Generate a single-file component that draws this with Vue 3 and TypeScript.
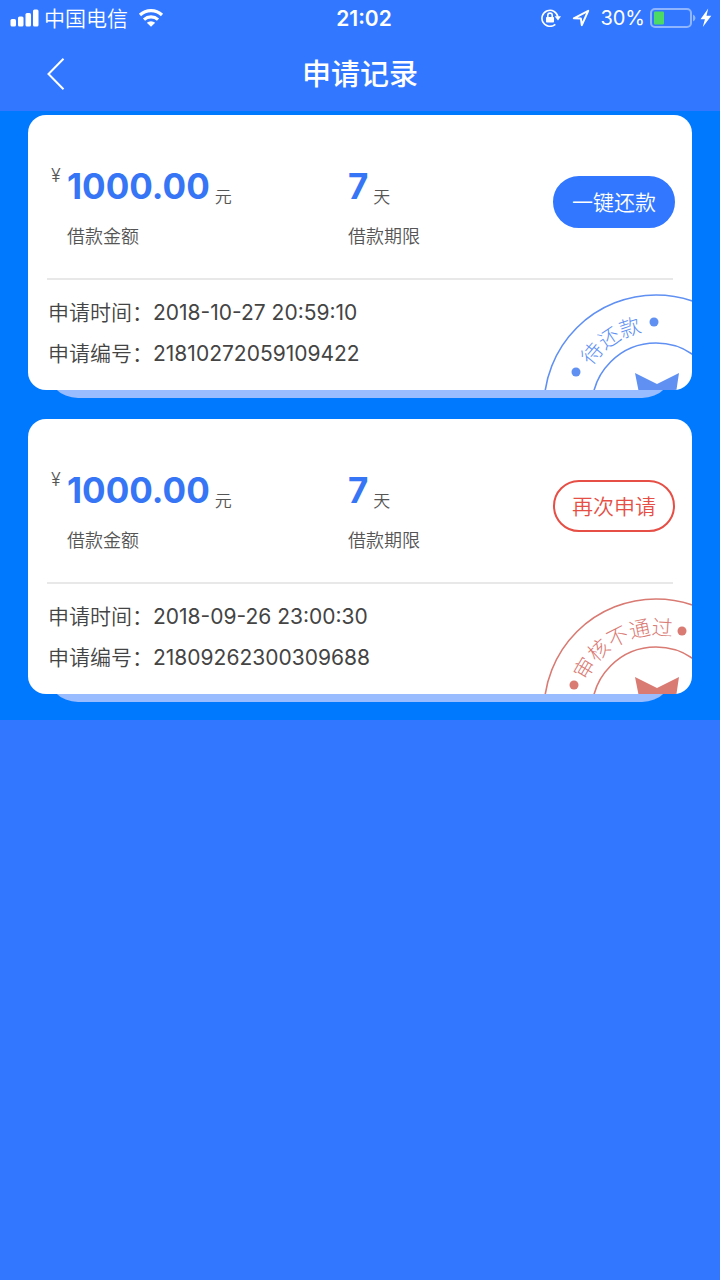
<script setup lang="ts">
interface LoanRecord {
  id: string
  amount: string
  days: number
  appliedAt: string
  action: string
  status: string
  tone: 'pending' | 'rejected'
  textOffset: number
  dots: [number, number][]
}

const records: LoanRecord[] = [
  {
    id: '21810272059109422',
    amount: '1000.00',
    days: 7,
    appliedAt: '2018-10-27 20:59:10',
    action: '一键还款',
    status: '待还款',
    tone: 'pending',
    textOffset: 74,
    dots: [[32, 78], [110, 28]],
  },
  {
    id: '21809262300309688',
    amount: '1000.00',
    days: 7,
    appliedAt: '2018-09-26 23:00:30',
    action: '再次申请',
    status: '审核不通过',
    tone: 'rejected',
    textOffset: 83,
    dots: [[30, 87], [138, 33]],
  },
]
</script>

<template>
  <div class="screen">
    <header class="top">
      <div class="status">
        <div class="status-side">
          <svg class="signal" width="29" height="18" viewBox="0 0 29 18" aria-hidden="true">
            <rect x="0.5" y="10" width="5.5" height="7.5" rx="1.5" />
            <rect x="8" y="7.5" width="5.5" height="10" rx="1.5" />
            <rect x="15.5" y="4" width="5.5" height="13.5" rx="1.5" />
            <rect x="23" y="0.5" width="5.5" height="17" rx="1.5" />
          </svg>
          <span class="carrier">中国电信</span>
          <svg class="wifi" width="26" height="18" viewBox="0 0 26 18" aria-hidden="true">
            <path d="M2 6 A16 16 0 0 1 24 6" />
            <path d="M6 10.6 A10.4 10.4 0 0 1 20 10.6" />
            <path class="solid" d="M13 17.8 L8.8 13.8 A6.2 6.2 0 0 1 17.2 13.8 Z" />
          </svg>
        </div>
        <time class="clock">21:02</time>
        <div class="status-side end">
          <svg class="lock" width="20" height="18" viewBox="0 0 20 18" aria-hidden="true">
            <path class="line" d="M14.3 15.3 A8 8 0 1 1 16.9 8.2" />
            <path d="M13.6 7.2 H20 L17 11.6 Z" />
            <rect x="5" y="8" width="8" height="5.6" rx="0.8" />
            <path class="line" d="M6.8 8 V6.3 A2.2 2.2 0 0 1 11.2 6.3 V8" />
          </svg>
          <svg class="locate" width="18" height="18" viewBox="0 0 18 18" aria-hidden="true">
            <path d="M1.8 9.3 L16.2 1.8 L9.8 16.2 L8.9 9.6 Z" />
          </svg>
          <span class="percent">30%</span>
          <svg class="battery" width="46" height="20" viewBox="0 0 46 20" aria-hidden="true">
            <rect class="shell" x="1" y="1" width="40" height="18" rx="4" />
            <rect class="charge" x="4" y="3.5" width="10" height="13" rx="1" />
            <path class="cap" d="M43 6.5 Q45.5 7.5 45.5 10 Q45.5 12.5 43 13.5 Z" />
          </svg>
          <svg class="bolt" width="12" height="20" viewBox="0 0 12 20" aria-hidden="true">
            <path d="M8.2 0.5 L0.5 11.2 H4.9 L2.8 19 L11.3 7.8 H6.5 Z" />
          </svg>
        </div>
      </div>
      <nav class="nav">
        <button class="back" type="button" aria-label="返回">
          <svg width="18" height="32" viewBox="0 0 18 32" aria-hidden="true">
            <path d="M16.5 0.8 L1.5 16 L16.5 31.2" />
          </svg>
        </button>
        <h1>申请记录</h1>
      </nav>
    </header>

    <main class="list">
      <article v-for="record in records" :key="record.id" class="record">
        <div class="card" :class="record.tone">
          <section class="summary">
            <div class="figure amount">
              <span class="currency">¥</span>
              <div>
                <p class="value"><strong>{{ record.amount }}</strong><span>元</span></p>
                <p class="caption">借款金额</p>
              </div>
            </div>
            <div class="figure">
              <div>
                <p class="value"><strong>{{ record.days }}</strong><span>天</span></p>
                <p class="caption">借款期限</p>
              </div>
            </div>
            <button class="action" type="button">{{ record.action }}</button>
          </section>
          <dl class="details">
            <div><dt>申请时间：</dt><dd>{{ record.appliedAt }}</dd></div>
            <div><dt>申请编号：</dt><dd>{{ record.id }}</dd></div>
          </dl>
          <svg class="stamp" width="148" height="96" viewBox="0 0 148 96">
            <defs>
              <path :id="'arc-' + record.id" d="M36 113 A76 76 0 0 1 188 113" />
            </defs>
            <circle class="ring" cx="112" cy="113" r="112" />
            <circle class="ring" cx="112" cy="113" r="64" />
            <circle v-for="(dot, i) in record.dots" :key="i" :cx="dot[0]" :cy="dot[1]" r="4.5" />
            <path d="M91 79 L113 90 L135 79 L132 99 H95 Z" />
            <text text-anchor="middle">
              <textPath :href="'#arc-' + record.id" :startOffset="record.textOffset">{{ record.status }}</textPath>
            </text>
          </svg>
        </div>
      </article>
    </main>
  </div>
</template>

<style>
html,
body {
  background: #3277ff;
}
</style>

<style scoped>
.screen {
  min-height: 100vh;
  background: #3277ff;
  font-family: Inter, "Noto Sans CJK SC", sans-serif;
  color: #444;
}

h1,
p,
dl,
dd {
  margin: 0;
}

button {
  font: inherit;
  cursor: pointer;
}

.top {
  color: #fff;
}

.status {
  display: grid;
  grid-template-columns: 1fr auto 1fr;
  align-items: center;
  height: 36px;
  padding: 0 8px 0 10px;
}

.status-side {
  display: flex;
  align-items: center;
}

.status-side.end {
  justify-content: flex-end;
}

.status svg {
  flex: none;
  fill: #fff;
}

.carrier {
  margin: 0 10px 0 5px;
  padding-top: 2px;
  font-size: 21px;
  font-weight: 350;
  line-height: 34px;
}

.wifi path {
  fill: none;
  stroke: #fff;
  stroke-width: 3.2;
}

.wifi .solid {
  fill: #fff;
  stroke: none;
}

.clock {
  padding-left: 6px;
  font-size: 21px;
  font-weight: 600;
}

.lock .line {
  fill: none;
  stroke: #fff;
  stroke-width: 1.6;
}

.locate {
  margin: 0 10px 0 11px;
}

.locate path {
  fill: none;
  stroke: #fff;
  stroke-width: 2;
  stroke-linejoin: round;
}

.percent {
  margin-right: 5px;
  font-size: 20px;
}

.battery .shell {
  fill: none;
  stroke: #8fb5ff;
  stroke-width: 2;
}

.battery .charge {
  fill: #4cd964;
}

.battery .cap {
  fill: #8fb5ff;
}

.bolt {
  margin-left: 4px;
}

.nav {
  display: grid;
  grid-template-columns: 80px 1fr 80px;
  align-items: center;
  height: 75px;
}

.back {
  display: flex;
  justify-content: flex-end;
  padding: 0 15px 0 0;
  border: 0;
  background: none;
}

.back path {
  fill: none;
  stroke: #fff;
  stroke-width: 2;
}

.nav h1 {
  padding-top: 2px;
  text-align: center;
  font-size: 29px;
  font-weight: 500;
  line-height: 44px;
}

.list {
  display: flex;
  flex-direction: column;
  gap: 21px;
  padding: 4px 28px 18px;
  background: #0079ff;
}

.record {
  position: relative;
  padding-bottom: 8px;
}

.record::before {
  content: "";
  position: absolute;
  inset: auto 18px 0;
  height: 40px;
  border-radius: 0 0 32px 32px;
  background: #99bbff;
}

.card {
  position: relative;
  overflow: hidden;
  border-radius: 18px;
  background: #fff;
}

.summary {
  display: grid;
  grid-template-columns: 301px 1fr auto;
  align-items: start;
  margin: 0 19px;
  padding-top: 48px;
  height: 115px;
  border-bottom: 2px solid #e8e8e8;
}

.figure {
  display: flex;
}

.currency {
  width: 20px;
  padding-left: 4px;
  box-sizing: border-box;
  font-size: 18px;
  line-height: 26px;
}

.value {
  display: flex;
  align-items: flex-end;
  gap: 5px;
  height: 46px;
}

.value strong {
  font-size: 35px;
  font-weight: 700;
  line-height: 46px;
  color: #3675f5;
}

.value span {
  font-size: 17px;
  line-height: 24px;
}

.caption {
  margin-top: 15px;
  font-size: 18px;
  line-height: 26px;
}

.value span,
.caption,
.currency {
  font-weight: 350;
  color: #555;
}

.action {
  height: 52px;
  margin: 13px -2px 0 0;
  padding: 0 17px 2px;
  border: 2px solid #3277ff;
  border-radius: 26px;
  background: #3277ff;
  color: #fff;
  font-size: 21px;
  font-weight: 350;
}

.rejected .action {
  border-color: #e64f46;
  background: #fff;
  color: #e64f46;
}

.details {
  padding: 12px 20px 16px;
  font-size: 21px;
  line-height: 41px;
}

.details div {
  display: flex;
}

.details dt {
  font-weight: 350;
}

.stamp {
  position: absolute;
  right: 0;
  bottom: 0;
  color: #6090f2;
  fill: currentColor;
}

.rejected .stamp {
  color: #d97a73;
}

.stamp .ring {
  fill: none;
  stroke: currentColor;
  stroke-width: 1.6;
}

.stamp text {
  font-family: "Noto Sans CJK SC", sans-serif;
  font-size: 21px;
  font-weight: 300;
}
</style>
